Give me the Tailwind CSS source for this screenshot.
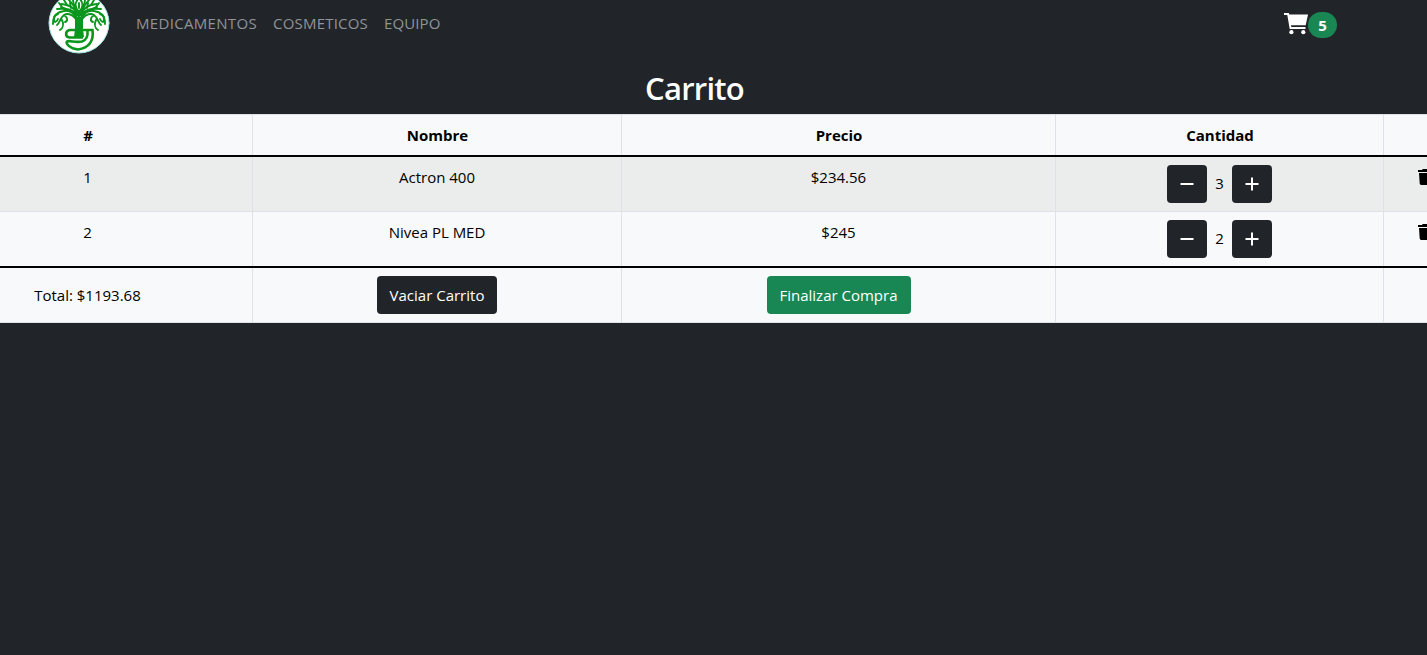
<!DOCTYPE html>
<html lang="es">
<head>
<meta charset="utf-8">
<title>Carrito</title>
<script src="https://cdn.jsdelivr.net/npm/@tailwindcss/browser@4"></script>
</head>
<body class="h-screen overflow-hidden bg-[#212529] font-['Open_Sans','Noto_Sans',sans-serif] text-[15px] leading-6 text-black">
<svg class="hidden">
  <symbol id="dash" viewBox="0 0 16 16"><path d="M1.5 8h13" stroke="#fff" stroke-width="2"/></symbol>
  <symbol id="plus" viewBox="0 0 16 16"><path d="M1.5 8h13M8 1.5v13" stroke="#fff" stroke-width="2"/></symbol>
  <symbol id="trash" viewBox="0 0 14 16"><path d="M4.200.6C4.400.2 4.800 0 5.200 0h3.600c.4 0 .8.2 1 .6L10 1h3a1 1 0 0 1 0 2H0V1h4zM1 4h12l-.7 10.600A1.500 1.500 0 0 1 10.800 16H3.200a1.500 1.500 0 0 1-1.500-1.400z"/></symbol>
</svg>
<header class="flex h-[62px] items-start pl-12">
  <svg class="-mt-2 h-[62px] w-[62px] shrink-0" viewBox="48 -8 62 62" fill="none" stroke="#0a961c" stroke-linecap="round">
    <circle cx="79" cy="23" r="30" fill="#fff" stroke="#9fe5dc" stroke-width="1"/>
    <g stroke-width="1.900">
      <path d="M76 20C75 13 70 10 64 11C57 12 53 16 54 20C54 23 57 22 58 19"/>
      <path d="M75 18C72 14 67 13 64 15C60 18 60 23 57 25M64 15C68 18 68 21 65 22M62 20C64 24 63 28 60 30M58 14C54 15 53 19 53 24"/>
      <path d="M82 20C83 13 88 10 94 11C101 12 105 16 104 20C104 23 101 22 100 19"/>
      <path d="M83 18C86 14 91 13 94 15C98 18 98 23 101 25M94 15C90 18 90 21 93 22M96 20C94 24 95 28 98 30M100 14C104 15 105 19 105 24"/>
      <path d="M76 17C75 10 67 8 57 9M77 16C76 9 71 5 61 4M78 15C76 8 73 4 68-1M79 19V12M80 15C82 8 85 4 90-1M81 16C82 9 87 5 97 4M82 17C83 10 91 8 101 9"/>
      <path d="M79 12C74 7 75 2 79-2C83 2 84 7 79 12M79 8V3M62 7L59 3M66 9L61 7M67 5L64 0M71 8L70 3M74 6L73 0M96 7L99 3M92 9L97 7M91 5L94 0M87 8L88 3M84 6L85 0"/>
    </g>
    <path d="M75 17h8v12l1 8H74l1-8z" fill="#0a961c" stroke="none"/>
    <path d="M79 30H69.500C65 31 65 37 69.500 37.500H82M84 30H92.500C94 41 89 48 78 49.500C70 49 65 43 67 41.500C70 40 75 43 82 41.500C86.500 40 88 36 87.500 31" stroke-width="2.600"/>
  </svg>
  <nav class="ml-[26px] flex gap-4 pt-[11px] text-[#919395]">
    <a class="w-[121px] whitespace-nowrap tracking-[0.32px]">MEDICAMENTOS</a>
    <a class="w-[95px] whitespace-nowrap tracking-[0.2px]">COSMETICOS</a>
    <a class="w-[56px] whitespace-nowrap tracking-[0.1px]">EQUIPO</a>
  </nav>
  <div class="mr-[90px] ml-auto flex pt-3">
    <svg class="h-6 w-6" viewBox="0 0 24 24" fill="#fff"><path d="M0 1h4.800l.5 1.500H24l-2.300 10.700H7l.3 1.800H21.500v2H5.700L3.300 3H0z"/><circle cx="7.400" cy="20.200" r="2.100"/><circle cx="19.300" cy="20.200" r="2.100"/></svg>
    <span class="flex h-[26px] w-[29px] items-center justify-center rounded-full bg-[#198754] font-bold text-white">5</span>
  </div>
</header>
<h1 class="flex h-[52px] w-[1389px] items-center justify-center text-[31px] font-semibold tracking-[-0.75px] text-white">Carrito</h1>
<table class="-ml-[77px] w-[1546px] table-fixed border-separate border-spacing-0 bg-[#f8f9fa] text-center [&_td]:p-0 [&_td]:pt-2 [&_td]:pr-px [&_td]:align-top [&_th]:p-0 [&_tr>*]:bg-[linear-gradient(#dee2e6,#dee2e6)] [&_tr>*]:bg-[length:1px_100%] [&_tr>*]:bg-right [&_tr>*]:bg-no-repeat">
  <colgroup><col class="w-[330px]"><col class="w-[369px]"><col class="w-[434px]"><col class="w-[328px]"><col class="w-[85px]"></colgroup>
  <thead>
    <tr class="h-[43px] font-bold [&>th]:border-t [&>th]:border-t-[#dee2e6] [&>th]:border-b-2 [&>th]:border-b-black"><th>#</th><th>Nombre</th><th>Precio</th><th>Cantidad</th><th></th></tr>
  </thead>
  <tbody>
    <tr class="h-[55px] bg-[#ebedec] [&>td]:border-b [&>td]:border-[#dee2e6]">
      <td>1</td><td>Actron 400</td><td>$234.56</td>
      <td><div class="flex items-center justify-center gap-2"><button class="flex h-[38px] w-10 items-center justify-center rounded bg-[#212529]"><svg class="h-4 w-4"><use href="#dash"/></svg></button><span class="-mt-[3px] w-[9px]">3</span><button class="flex h-[38px] w-10 items-center justify-center rounded bg-[#212529]"><svg class="h-4 w-4"><use href="#plus"/></svg></button></div></td>
      <td><svg class="mt-1 ml-[34px] h-4 w-3.5"><use href="#trash"/></svg></td>
    </tr>
    <tr class="h-14 [&>td]:border-b-2 [&>td]:border-b-black">
      <td>2</td><td>Nivea PL MED</td><td>$245</td>
      <td><div class="flex items-center justify-center gap-2"><button class="flex h-[38px] w-10 items-center justify-center rounded bg-[#212529]"><svg class="h-4 w-4"><use href="#dash"/></svg></button><span class="-mt-[3px] w-[9px]">2</span><button class="flex h-[38px] w-10 items-center justify-center rounded bg-[#212529]"><svg class="h-4 w-4"><use href="#plus"/></svg></button></div></td>
      <td><svg class="mt-1 ml-[34px] h-4 w-3.5"><use href="#trash"/></svg></td>
    </tr>
  </tbody>
  <tfoot>
    <tr class="h-[55px] [&>td]:border-b [&>td]:border-[#dee2e6]">
      <td><div class="leading-[38px]">Total: $1193.68</div></td>
      <td><button class="h-[38px] w-[120px] rounded bg-[#212529] text-white">Vaciar Carrito</button></td>
      <td><button class="h-[38px] w-36 rounded bg-[#198754] text-white">Finalizar Compra</button></td>
      <td></td><td></td>
    </tr>
  </tfoot>
</table>
</body>
</html>
